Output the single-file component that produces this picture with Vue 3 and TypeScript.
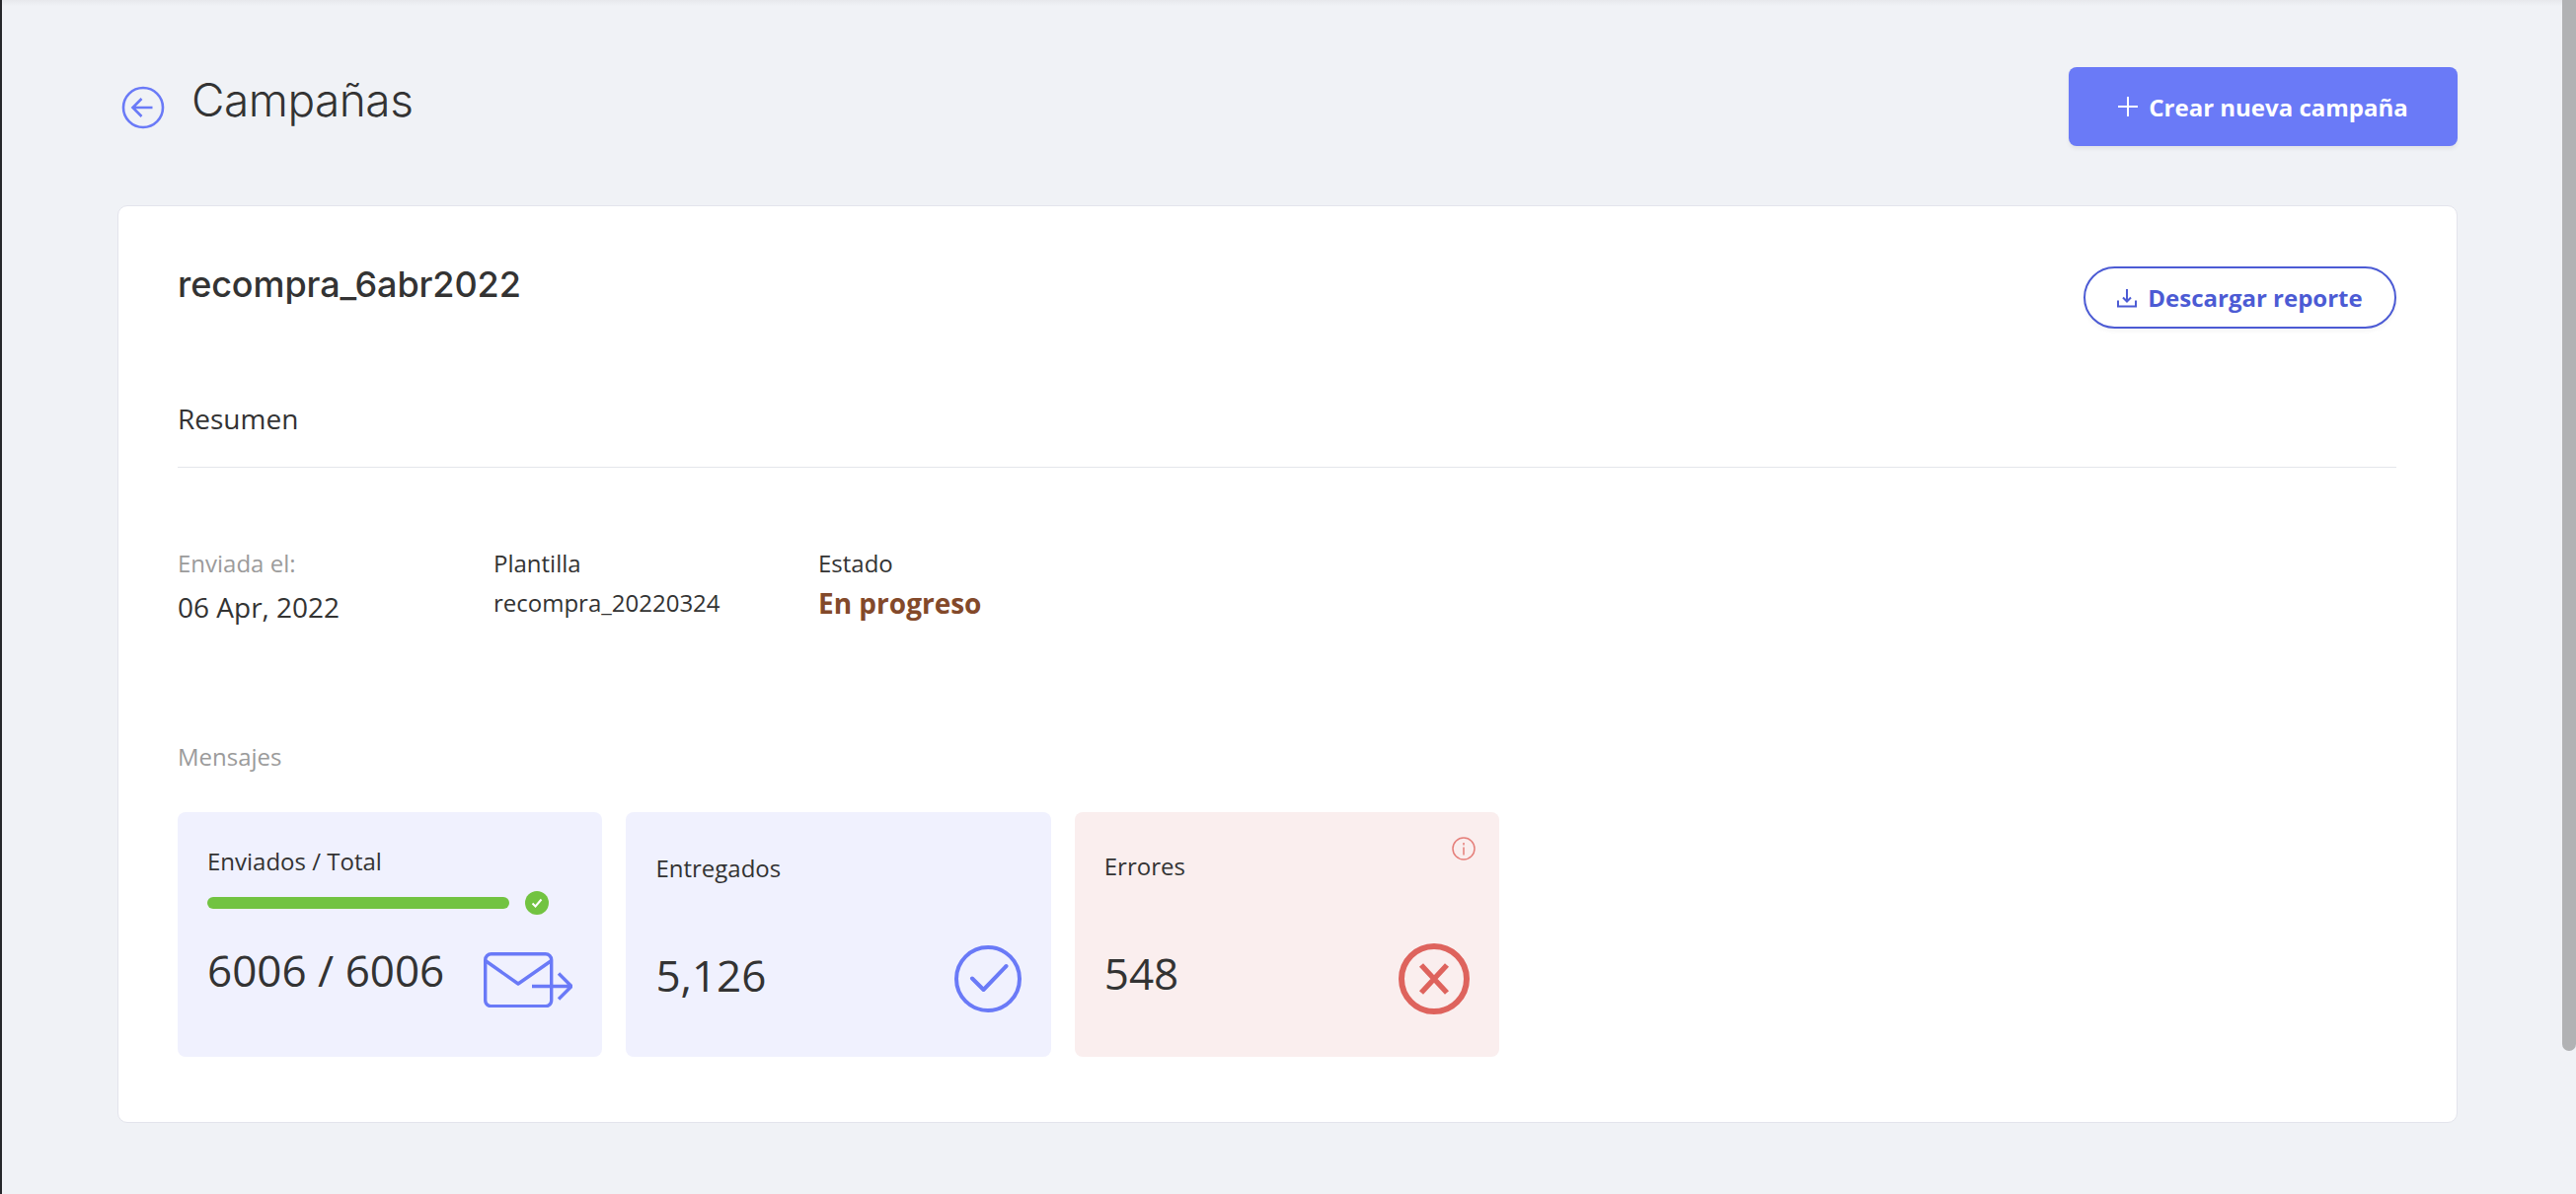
<template>
  <div class="page">
    <header class="top">
      <div class="heading">
        <button class="back" aria-label="Volver">
          <svg width="44" height="44" viewBox="0 0 44 44" fill="none" stroke="#6a7af7" stroke-width="2.6">
            <circle cx="22" cy="22" r="20" />
            <path d="M31.5 22H11.5M20.5 13l-9 9 9 9" />
          </svg>
        </button>
        <h1>Campañas</h1>
      </div>
      <button class="btn primary">
        <svg width="20" height="20" viewBox="0 0 20 20" stroke="#fff" stroke-width="2">
          <path d="M10 0v20M0 10h20" />
        </svg>
        Crear nueva campaña
      </button>
    </header>

    <main class="card">
      <div class="card-head">
        <h2>recompra_6abr2022</h2>
        <button class="btn outline">
          <svg width="20" height="20" viewBox="0 0 20 20" fill="none" stroke="#4c5bd4" stroke-width="2">
            <path d="M10 1v12M6 9.500l4 4 4-4M1 12.500V18.500H19V12.500" />
          </svg>
          Descargar reporte
        </button>
      </div>

      <div class="section-title">Resumen</div>

      <div class="meta">
        <div class="meta-col date">
          <span class="muted">Enviada el:</span>
          <span class="date-value">06 Apr, 2022</span>
        </div>
        <div class="meta-col template">
          <span>Plantilla</span>
          <span class="template-value">recompra_20220324</span>
        </div>
        <div class="meta-col">
          <span>Estado</span>
          <span class="status">En progreso</span>
        </div>
      </div>

      <div class="muted messages-label">Mensajes</div>

      <div class="stats">
        <div class="stat sent">
          <div class="stat-label">Enviados / Total</div>
          <div class="progress">
            <div class="track"><div class="fill" :style="{ width: percent + '%' }"></div></div>
            <svg width="24" height="24" viewBox="0 0 24 24">
              <circle cx="12" cy="12" r="12" fill="#72c341" />
              <path d="M7.500 12.500l3 3 6-7" fill="none" stroke="#fff" stroke-width="2" />
            </svg>
          </div>
          <div class="stat-row">
            <span class="stat-value">{{ sent }} / {{ total }}</span>
            <svg class="mail" width="90" height="56" viewBox="0 0 90 56" fill="none" stroke="#6a7af7" stroke-width="3.400">
              <rect x="1.700" y="1.700" width="67" height="53" rx="6" />
              <path d="M1.700 8.500L35 32 68.700 8.500" stroke-linejoin="round" />
              <path d="M49 34.500H88M76 21.500l13 13-13 13" />
            </svg>
          </div>
        </div>

        <div class="stat delivered">
          <div class="stat-label">Entregados</div>
          <div class="stat-row">
            <span class="stat-value">5,126</span>
            <svg width="68" height="68" viewBox="0 0 68 68" fill="none" stroke="#6a7af7" stroke-width="4">
              <circle cx="34" cy="34" r="32" />
              <path d="M18 33.500l11.500 11.500 23-24" stroke-linecap="round" stroke-linejoin="round" />
            </svg>
          </div>
        </div>

        <div class="stat errors">
          <svg class="info" width="24" height="24" viewBox="0 0 24 24" fill="none" stroke="#e57f7a" stroke-width="1.500">
            <circle cx="12" cy="12" r="11" />
            <path d="M12 10.500v8M12 6v2.500" />
          </svg>
          <div class="stat-label">Errores</div>
          <div class="stat-row">
            <span class="stat-value">548</span>
            <svg width="72" height="72" viewBox="0 0 72 72" fill="none" stroke="#de635d">
              <circle cx="36" cy="36" r="33" stroke-width="6" />
              <path d="M23 22l26 28M49 22L23 50" stroke-width="5.500" />
            </svg>
          </div>
        </div>
      </div>
    </main>

    <div class="scroll-thumb"></div>
  </div>
</template>

<script setup lang="ts">
const sent = 6006;
const total = 6006;
const percent = 100;
</script>

<style>
html,
body {
  margin: 0;
  background: #f0f2f6;
}
</style>

<style scoped>
.page {
  position: relative;
  box-sizing: border-box;
  height: 1210px;
  overflow: hidden;
  padding: 68px 120px 0 119px;
  border-left: 2px solid #26272b;
  background: #f0f2f6;
  color: #333;
  font-family: "Open Sans", "Liberation Sans", sans-serif;
}

.page::before {
  content: "";
  position: absolute;
  inset: 0 0 auto 0;
  height: 6px;
  background: linear-gradient(#e7e8ec, #f0f2f6);
}

.top {
  display: flex;
  justify-content: space-between;
  align-items: flex-start;
  margin-left: -2px;
}

.heading {
  display: flex;
  align-items: flex-start;
  gap: 27px;
  padding: 19px 0 0 4px;
}

.back {
  padding: 0;
  border: 0;
  background: none;
  line-height: 0;
}

h1 {
  margin: -14px 0 0;
  font-family: Inter, "Open Sans", sans-serif;
  font-size: 46px;
  font-weight: 300;
  letter-spacing: -0.5px;
  line-height: 56px;
  color: #333;
}

.btn {
  display: flex;
  align-items: center;
  justify-content: center;
  box-sizing: border-box;
  font-family: inherit;
  font-weight: 700;
}

.primary {
  gap: 11px;
  width: 394px;
  height: 80px;
  border: 0;
  border-radius: 8px;
  background: #6a7af7;
  color: #fff;
  font-size: 24px;
  box-shadow: 0 3px 4px rgba(0, 0, 0, 0.06);
}

.card {
  box-sizing: border-box;
  height: 930px;
  margin: 60px 0 0 -2px;
  padding: 61px 61px 61px 60px;
  border: 1px solid #e3e4ec;
  border-radius: 10px;
  background: #fff;
}

.card-head {
  display: flex;
  justify-content: space-between;
  align-items: flex-start;
}

h2 {
  margin: -5px 0 0;
  font-family: Inter, "Open Sans", sans-serif;
  font-size: 36px;
  font-weight: 500;
  letter-spacing: -0.1px;
  line-height: 46px;
  color: #333;
}

.outline {
  gap: 11px;
  width: 317px;
  height: 63px;
  border: 2.500px solid #4c5bd4;
  border-radius: 32px;
  background: #fff;
  color: #4c5bd4;
  font-size: 24px;
  box-shadow: 0 3px 4px rgba(0, 0, 0, 0.04);
}

.section-title {
  margin-top: 73px;
  padding-bottom: 31px;
  border-bottom: 1px solid #e4e6eb;
  font-size: 28px;
  line-height: 36px;
}

.meta {
  display: flex;
  margin-top: 81px;
}

.meta-col {
  display: flex;
  flex-direction: column;
  font-size: 24px;
  line-height: 32px;
}

.date {
  width: 320px;
}

.template {
  width: 329px;
}

.muted {
  color: #9b9b9b;
}

.date-value {
  margin-top: 9px;
  font-size: 28px;
  line-height: 38px;
}

.template-value {
  margin-top: 8px;
}

.status {
  margin-top: 6px;
  color: #83492a;
  font-size: 28px;
  font-weight: 700;
  line-height: 36px;
}

.messages-label {
  margin-top: 117px;
  font-size: 24px;
  line-height: 32px;
}

.stats {
  display: flex;
  gap: 24px;
  margin-top: 40px;
}

.stat {
  position: relative;
  display: flex;
  flex-direction: column;
  box-sizing: border-box;
  width: 430.400px;
  height: 248px;
  padding: 0 30px;
  border-radius: 8px;
  background: #f0f1fe;
}

.sent {
  padding-top: 34px;
}

.delivered {
  padding-top: 41px;
}

.errors {
  padding-top: 39px;
  background: #faeeee;
}

.stat-label {
  font-size: 24px;
  line-height: 32px;
}

.progress {
  display: flex;
  align-items: center;
  gap: 16px;
  margin-top: 14px;
}

.track {
  width: 306px;
  height: 12px;
  border-radius: 6px;
  overflow: hidden;
}

.fill {
  height: 100%;
  background: #72c341;
}

.stat-row {
  display: flex;
  justify-content: space-between;
  align-items: center;
  margin-top: 62px;
}

.sent .stat-row {
  margin-top: 26px;
}

.sent .stat-value {
  margin-bottom: 20px;
}

.delivered .stat-value {
  margin-bottom: 8px;
}

.errors .stat-value {
  margin-bottom: 12px;
}

.stat-value {
  font-size: 44px;
  line-height: 60px;
}

.info {
  position: absolute;
  top: 25px;
  right: 24px;
}

.scroll-thumb {
  position: absolute;
  top: 0;
  right: 0;
  width: 14px;
  height: 1065px;
  border-radius: 0 0 7px 7px;
  background: #b1b2b4;
}
</style>
